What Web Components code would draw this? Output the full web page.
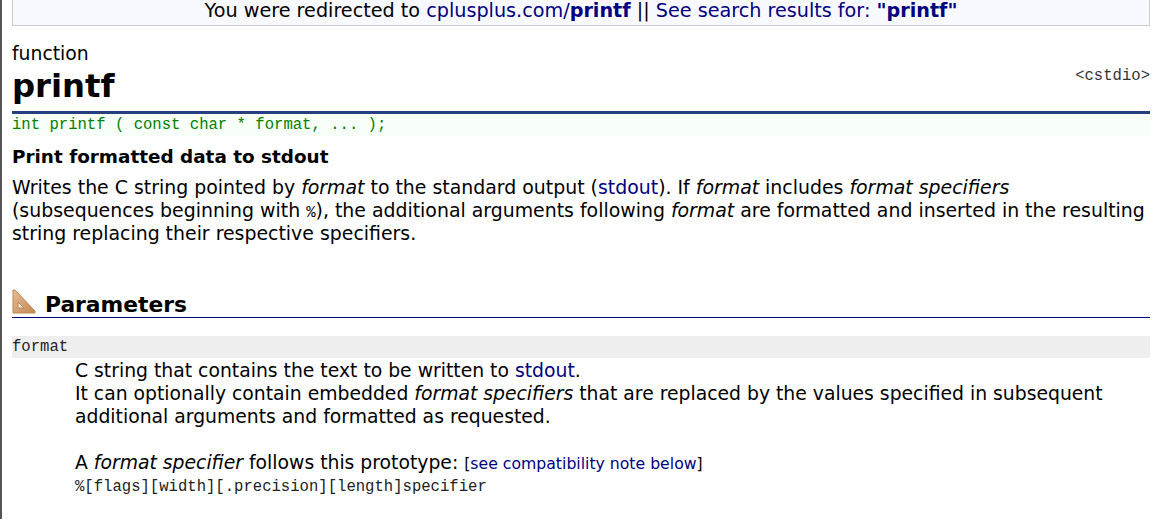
<!DOCTYPE html>
<html lang="en">
<head>
<meta charset="UTF-8">
<title>printf</title>
<style>
  html, body { margin: 0; height: 100%; overflow: hidden; background: #fff; }
  body { font-family: "DejaVu Sans", Verdana, sans-serif; color: #000; }
</style>
</head>
<body>
<ref-page>
  <redirect-bar>
    You were redirected to <a href="#">cplusplus.com/<b>printf</b></a> || <a href="#">See search results for: <b>"printf"</b></a>
  </redirect-bar>
  <ref-title kind="function" name="printf" header="&lt;cstdio&gt;"></ref-title>
  <proto-line>int printf ( const char * format, ... );</proto-line>
  <ref-desc>
    <span slot="heading">Print formatted data to stdout</span>
    Writes the C string pointed by <i>format</i> to the standard output (<a href="#">stdout</a>). If <i>format</i> includes <i>format specifiers</i> (subsequences beginning with <tt-text>%</tt-text>), the additional arguments following <i>format</i> are formatted and inserted in the resulting string replacing their respective specifiers.
  </ref-desc>
  <section-head>Parameters</section-head>
  <param-item name="format">
    C string that contains the text to be written to <a href="#">stdout</a>.<br>
    It can optionally contain embedded <i>format specifiers</i> that are replaced by the values specified in subsequent additional arguments and formatted as requested.<br>
    <br>
    A <i>format specifier</i> follows this prototype: <small-note>[<a href="#">see compatibility note below</a>]</small-note><br>
    <tt-text raise>%[flags][width][.precision][length]specifier</tt-text>
  </param-item>
</ref-page>

<script>
  const linkCss = '::slotted(a) { color: #000080; text-decoration: none; }';

  function define(tag, html) {
    customElements.define(tag, class extends HTMLElement {
      constructor() { super();
        this.attachShadow({ mode: 'open' }).innerHTML = html;
      }
    });
  }

  define('ref-page', `
    <style>
      :host {
        display: block;
        height: 520px;
        box-sizing: border-box;
        padding: 0 22px 0 10px;
        border-left: 2px solid #555;
      }
    </style>
    <slot></slot>`);

  define('redirect-bar', `
    <style>
      :host {
        display: block;
        height: 27px;
        box-sizing: border-box;
        margin-top: -1px;
        background: #f8f9ff;
        border: 1px solid #ccc;
        text-align: center;
        font-size: 19.2px;
        line-height: 22px;
      }
      ${linkCss}
    </style>
    <slot></slot>`);

  customElements.define('ref-title', class extends HTMLElement {
    constructor() { super();
      const root = this.attachShadow({ mode: 'open' });
      root.innerHTML = `
        <style>
          :host { display: flex; justify-content: space-between; height: 88px; box-sizing: border-box; border-bottom: 3px solid #26407d; }
          .kind { font-size: 18.8px; line-height: 22px; margin-top: 17px; }
          .name { font-size: 32.3px; font-weight: bold; line-height: 36px; margin-top: 3px; }
          .hdr { font: 15.6px/18px "Liberation Mono", monospace; margin-top: 41px; color: #333; }
        </style>
        <div><div class="kind"></div><div class="name"></div></div>
        <div class="hdr"></div>`;
      root.querySelector('.kind').textContent = this.getAttribute('kind');
      root.querySelector('.name').textContent = this.getAttribute('name');
      root.querySelector('.hdr').textContent = this.getAttribute('header');
    }
  });

  define('proto-line', `
    <style>
      :host {
        display: block;
        height: 22px;
        background: #f8fff8;
        color: #008000;
        font: 15.6px/23px "Liberation Mono", monospace;
      }
    </style>
    <slot></slot>`);

  define('ref-desc', `
    <style>
      :host { display: block; font-size: 18.9px; line-height: 23px; }
      .h { font-size: 18.4px; font-weight: bold; margin: 9px 0 8px; line-height: 23px; }
      ${linkCss}
    </style>
    <div class="h"><slot name="heading"></slot></div>
    <slot></slot>`);

  define('tt-text', `
    <style>
      :host { font: 15.6px/18px "Liberation Mono", monospace; }
      :host([raise]) { vertical-align: 2px; color: #222; }
    </style>
    <slot></slot>`);

  define('small-note', `
    <style>
      :host { font-size: 15.7px; }
      ${linkCss}
    </style>
    <slot></slot>`);

  define('section-head', `
    <style>
      :host {
        display: flex;
        align-items: flex-end;
        gap: 9px;
        height: 28px;
        margin-top: 44px;
        border-bottom: 1px solid #000080;
        font-size: 21.8px;
        font-weight: bold;
        line-height: 24px;
      }
      svg { display: block; margin-bottom: 3px; }
    </style>
    <svg width="24" height="25" viewBox="0 0 24 25">
      <defs><linearGradient id="w" x1="0" y1="0" x2="1" y2="1"><stop offset="0" stop-color="#e6bb92"/><stop offset="1" stop-color="#c48a55"/></linearGradient></defs>
      <path d="M6 13 V19 H12 Z" fill="#f6ead9"/>
      <path fill-rule="evenodd" d="M1 1 H3 L23 22 V24 H1 Z M6 13 V19 H12 Z" fill="url(#w)" stroke="#bd8652" stroke-width="1"/>
    </svg>
    <span><slot></slot></span>`);

  customElements.define('param-item', class extends HTMLElement {
    constructor() { super();
      const root = this.attachShadow({ mode: 'open' });
      root.innerHTML = `
        <style>
          :host { display: block; margin-top: 18px; }
          .dt {
            height: 22px;
            background: #eee;
            font: 15.6px/23px "Liberation Mono", monospace;
            color: #222;
          }
          .dd { margin-left: 63px; padding-top: 1px; padding-right: 30px; font-size: 18.8px; line-height: 23px; }
          ${linkCss}
        </style>
        <div class="dt"></div>
        <div class="dd"><slot></slot></div>`;
      root.querySelector('.dt').textContent = this.getAttribute('name');
    }
  });
</script>
</body>
</html>
